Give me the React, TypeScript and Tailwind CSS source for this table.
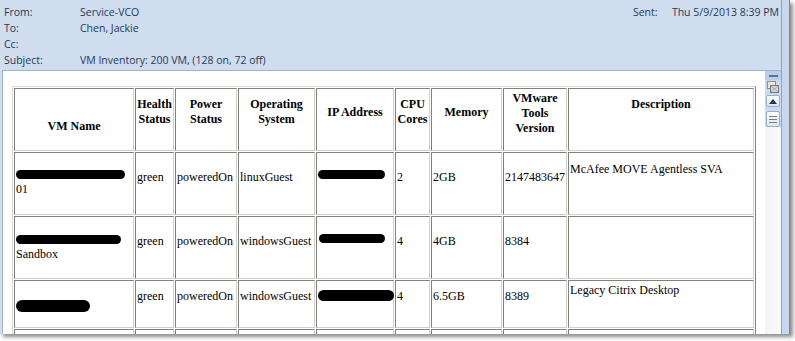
import React from "react"

const uiFont = { fontFamily: '"Open Sans", "Noto Sans", sans-serif' }
const serif = { fontFamily: '"Liberation Serif", "Times New Roman", serif' }

const cell =
  "border border-solid border-t-[#808080] border-l-[#808080] border-r-[#d4d0c8] border-b-[#d4d0c8] px-[1px] align-top text-left font-normal"

function Blot({ w, h = 9 }: { w: number; h?: number }) {
  return (
    <span
      className="block rounded-full bg-black my-[3px]"
      style={{ width: w, height: h }}
    />
  )
}

function HeaderLine({ label, value }: { label: string; value?: string }) {
  return (
    <div className="flex">
      <span className="w-[76px]">{label}</span>
      <span>{value}</span>
    </div>
  )
}

function Scrollbar() {
  return (
    <div className="w-[16px] flex flex-col bg-[#cbdaee] border-t border-[#9fb3cf]">
      <div className="h-[9px] flex items-center justify-center bg-[#bccfe8]">
        <span className="block w-[9px] h-[2px] bg-[#56749f]" />
      </div>
      <div className="h-[13px] flex items-center justify-center">
        <svg width="12" height="12" viewBox="0 0 12 12">
          <rect x="0.5" y="0.5" width="8" height="7" fill="#e8e8e8" stroke="#8c8c8c" />
          <rect x="3.5" y="4.5" width="8" height="7" fill="#d9d9d9" stroke="#7a7a7a" />
          <path d="M4 5 L11 11 M11 5 L4 11" stroke="#9a9a9a" strokeWidth="0.8" />
        </svg>
      </div>
      <div className="h-[2px]" />
      <div className="mx-[1px] h-[12px] rounded-[2px] border border-[#9aaec9] bg-gradient-to-b from-white to-[#dbe4f0] flex items-center justify-center">
        <svg width="8" height="5" viewBox="0 0 8 5">
          <path d="M0 5 L4 0 L8 5 Z" fill="#1e395b" />
        </svg>
      </div>
      <div className="h-[4px]" />
      <div className="mx-[1px] h-[16px] rounded-[2px] border border-[#9aaec9] bg-gradient-to-b from-white to-[#dfe6f0] flex flex-col items-center justify-center gap-[2px]">
        <span className="block w-[8px] h-[1px] bg-[#6f7f95]" />
        <span className="block w-[8px] h-[1px] bg-[#6f7f95]" />
        <span className="block w-[8px] h-[1px] bg-[#6f7f95]" />
      </div>
      <div className="flex-1 bg-gradient-to-r from-[#f1f3f6] to-[#fbfbfc]" />
    </div>
  )
}

export default function App() {
  return (
    <div className="w-[795px] h-[341px] bg-white overflow-hidden">
      <div className="w-[790px] h-[334px] flex shadow-[3px_3px_4px_rgba(0,0,0,0.45)]">
        <div className="flex-1 flex flex-col bg-[#d0ddee]">
          <div
            className="h-[70px] pt-[4px] pl-[4px] pr-[2px] flex text-[#1e395b] text-[10.5px] leading-[16px]"
            style={uiFont}
          >
            <div className="flex-1">
              <HeaderLine label="From:" value="Service-VCO" />
              <HeaderLine label="To:" value="Chen, Jackie" />
              <HeaderLine label="Cc:" />
              <HeaderLine label="Subject:" value="VM Inventory: 200 VM, (128 on, 72 off)" />
            </div>
            <div className="flex">
              <span className="w-[39px]">Sent:</span>
              <span>Thu 5/9/2013 8:39 PM</span>
            </div>
          </div>

          <div className="flex-1 flex min-h-0 pl-[2px]">
            <div className="flex-1 bg-white border-l border-t border-[#9fb3cf] overflow-hidden">
              <table
                className="ml-[9px] mt-[15px] table-fixed w-[744px] border-separate border-spacing-[1px] border border-solid border-t-[#dcd9d2] border-l-[#dcd9d2] border-r-[#808080] border-b-[#808080] text-[12px] leading-[15px] text-black"
                style={serif}
              >
                <thead>
                  <tr className="font-bold">
                    <th className={`${cell} w-[120px] h-[63px] pt-[30px] !text-center !font-bold`}>VM Name</th>
                    <th className={`${cell} w-[39px] pt-[8px] !text-center !font-bold`}>Health Status</th>
                    <th className={`${cell} w-[62px] pt-[8px] !text-center !font-bold`}>Power Status</th>
                    <th className={`${cell} w-[77px] pt-[8px] !text-center !font-bold`}>Operating System</th>
                    <th className={`${cell} w-[78px] pt-[16px] !text-center !font-bold`}>IP Address</th>
                    <th className={`${cell} w-[35px] pt-[8px] !text-center !font-bold`}>CPU Cores</th>
                    <th className={`${cell} w-[71px] pt-[16px] !text-center !font-bold`}>Memory</th>
                    <th className={`${cell} w-[64px] pt-[2px] !text-center !font-bold`}>VMware Tools Version</th>
                    <th className={`${cell} w-[186px] pt-[8px] !text-center !font-bold`}>Description</th>
                  </tr>
                </thead>
                <tbody>
                  <tr>
                    <td className={`${cell} h-[63px] pt-[14px]`}>
                      <Blot w={109} />
                      01
                    </td>
                    <td className={`${cell} pt-[17px]`}>green</td>
                    <td className={`${cell} pt-[17px]`}>poweredOn</td>
                    <td className={`${cell} pt-[17px]`}>linuxGuest</td>
                    <td className={`${cell} pt-[14px]`}>
                      <Blot w={67} />
                    </td>
                    <td className={`${cell} pt-[17px]`}>2</td>
                    <td className={`${cell} pt-[17px]`}>2GB</td>
                    <td className={`${cell} pt-[17px]`}>2147483647</td>
                    <td className={`${cell} pt-[9px]`}>McAfee MOVE Agentless SVA</td>
                  </tr>
                  <tr>
                    <td className={`${cell} h-[63px] pt-[15px]`}>
                      <Blot w={105} />
                      Sandbox
                    </td>
                    <td className={`${cell} pt-[17px]`}>green</td>
                    <td className={`${cell} pt-[17px]`}>poweredOn</td>
                    <td className={`${cell} pt-[17px]`}>windowsGuest</td>
                    <td className={`${cell} pt-[14px] pl-[2px]`}>
                      <Blot w={66} />
                    </td>
                    <td className={`${cell} pt-[17px]`}>4</td>
                    <td className={`${cell} pt-[17px]`}>4GB</td>
                    <td className={`${cell} pt-[17px]`}>8384</td>
                    <td className={`${cell} pt-[9px]`}></td>
                  </tr>
                  <tr>
                    <td className={`${cell} h-[48px] pt-[16px]`}>
                      <Blot w={74} h={12} />
                    </td>
                    <td className={`${cell} pt-[8px]`}>green</td>
                    <td className={`${cell} pt-[8px]`}>poweredOn</td>
                    <td className={`${cell} pt-[8px]`}>windowsGuest</td>
                    <td className={`${cell} pt-[6px]`}>
                      <Blot w={76} h={11} />
                    </td>
                    <td className={`${cell} pt-[8px]`}>4</td>
                    <td className={`${cell} pt-[8px]`}>6.5GB</td>
                    <td className={`${cell} pt-[8px]`}>8389</td>
                    <td className={`${cell} pt-[2px]`}>Legacy Citrix Desktop</td>
                  </tr>
                  <tr>
                    <td className={`${cell} h-[40px]`}></td>
                    <td className={cell}></td>
                    <td className={cell}></td>
                    <td className={cell}></td>
                    <td className={cell}></td>
                    <td className={cell}></td>
                    <td className={cell}></td>
                    <td className={cell}></td>
                    <td className={cell}></td>
                  </tr>
                </tbody>
              </table>
            </div>
            <Scrollbar />
          </div>
        </div>
        <div className="w-[9px] bg-[#c6d7ee] border-l border-r border-l-[#8aa5cb] border-r-[#6a88b3]" />
      </div>
    </div>
  )
}
